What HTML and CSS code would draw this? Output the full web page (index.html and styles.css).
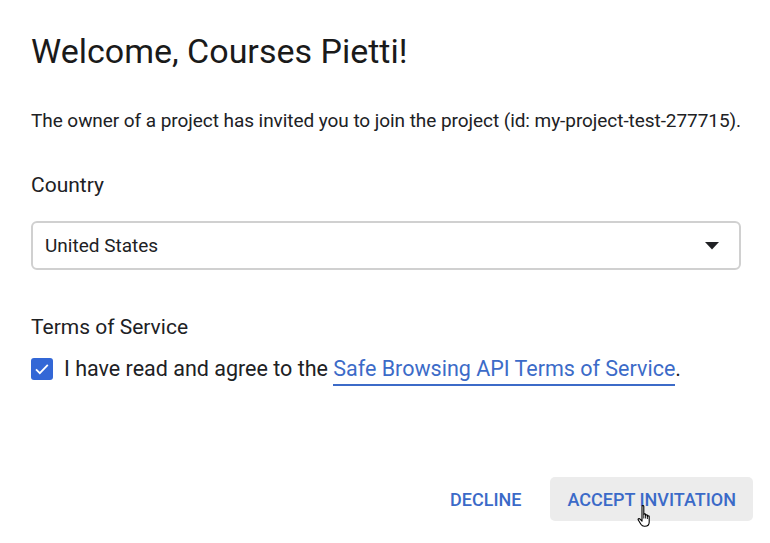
FILE: index.html
```html
<!DOCTYPE html>
<html>
<head>
<meta charset="utf-8">
<link rel="stylesheet" href="styles.css">
</head>
<body>
<div class="dialog">
  <h1 class="title">Welcome, Courses Pietti!</h1>
  <p class="intro">The owner of a project has invited you to join the project (id: my-project-test-277715).</p>
  <div class="label country-label">Country</div>
  <div class="select">
    <span class="select-value">United States</span>
    <svg class="select-arrow" width="14" height="8" viewBox="0 0 14 8"><path d="M0 0h14L7 7.5z" fill="#202124"/></svg>
  </div>
  <div class="label tos-label">Terms of Service</div>
  <div class="agree">
    <span class="checkbox">
      <svg width="22" height="22" viewBox="0 0 22 22"><path d="M5 11.3l3.8 3.8 8-8.2" fill="none" stroke="#fff" stroke-width="1.8"/></svg>
    </span>
    <span class="agree-text">I have read and agree to the <a class="link" href="#">Safe Browsing API Terms of Service</a>.</span>
  </div>
  <div class="actions">
    <button class="btn btn-text">DECLINE</button>
    <button class="btn btn-filled">ACCEPT INVITATION
      <svg class="cursor" width="18" height="24" viewBox="0 0 18 24"><path d="M5 2.2c0-1 1.8-1 1.8 0v8.3c0-1 1.8-1 1.8 0v1c0-1 1.8-1 1.8 0v1c0-1 1.8-1 1.8 0v5.5c0 2.5-1.6 4.3-4.3 4.3H7.3c-1.6 0-2.6-.8-3.4-2L1.3 16c-.6-.9.7-1.9 1.5-1.1L5 17.2z" fill="#fff" stroke="#000" stroke-width="1.1" stroke-linejoin="round"/><path d="M6.8 10.5v4M8.6 11.5v3M10.4 12.5v2.5" stroke="#000" stroke-width="0.9" fill="none"/></svg>
    </button>
  </div>
</div>
</body>
</html>
```
FILE: styles.css
```css
html, body {
  margin: 0;
  padding: 0;
  background: #ffffff;
}
body {
  font-family: Roboto, "Liberation Sans", sans-serif;
  color: #202124;
}
.dialog {
  width: 770px;
  height: 543px;
  box-sizing: border-box;
  padding: 31px 29px 0 31px;
  display: flex;
  flex-direction: column;
}
.title {
  margin: 0;
  font-size: 34px;
  font-weight: 400;
  line-height: 40px;
  color: #1a1a1a;
}
.intro {
  margin: 38px 0 0 0;
  font-size: 19px;
  line-height: 24px;
  letter-spacing: -0.06px;
  white-space: nowrap;
  color: #202124;
}
.label {
  font-size: 21px;
  line-height: 24px;
  color: #202124;
}
.country-label {
  margin-top: 40px;
}
.select {
  margin-top: 24px;
  width: 710px;
  height: 49px;
  box-sizing: border-box;
  border: 2px solid #d0d0d0;
  border-radius: 6px;
  display: flex;
  align-items: center;
  justify-content: space-between;
  padding: 0 20px 0 12px;
}
.select-value {
  font-size: 19px;
  color: #202124;
}
.select-arrow {
  display: block;
}
.tos-label {
  margin-top: 45px;
}
.agree {
  margin-top: 16px;
  display: flex;
  align-items: center;
  gap: 11px;
}
.checkbox {
  width: 22px;
  height: 22px;
  border-radius: 3px;
  background: #3367d6;
  display: flex;
}
.agree-text {
  font-size: 21.5px;
  line-height: 28px;
  color: #202124;
}
.link {
  color: #3c6bc8;
  text-decoration: none;
  border-bottom: 2px solid #3c6bc8;
  padding-bottom: 3px;
}
.actions {
  margin-top: auto;
  margin-bottom: 22px;
  display: flex;
  justify-content: flex-end;
  align-items: center;
  gap: 12px;
  margin-right: -12px;
}
.btn {
  font-family: Roboto, "Liberation Sans", sans-serif;
  font-size: 18px;
  font-weight: 500;
  color: #3b6ac8;
  border: none;
  background: transparent;
  height: 44px;
  border-radius: 5px;
  padding: 0 17px;
  position: relative;
  cursor: pointer;
}
.btn-filled {
  background: #ececec;
}
.cursor {
  position: absolute;
  left: 87px;
  top: 27px;
}
```
